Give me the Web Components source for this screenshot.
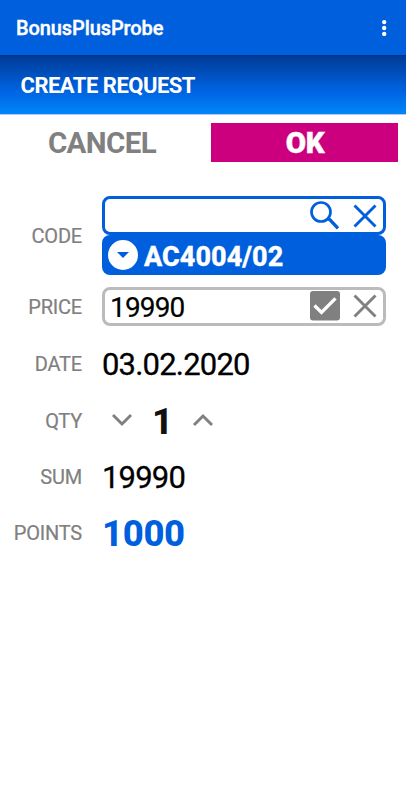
<!DOCTYPE html>
<html lang="en">
<head>
<meta charset="utf-8">
<title>BonusPlusProbe</title>
<style>
body{margin:0;background:#fff;font-family:Roboto,"Liberation Sans",sans-serif}
</style>
</head>
<body>
<request-page></request-page>
<script>
function define(name, html) {
  const t = document.createElement('template');
  t.innerHTML = html;
  customElements.define(name, class extends HTMLElement {
    constructor() {
      super();
      this.attachShadow({mode: 'open'}).append(t.content.cloneNode(true));
    }
  });
}

define('app-bar', `<style>
:host{display:flex;height:55px;box-sizing:border-box;align-items:center;justify-content:space-between;padding:0 18px 0 16px;background:#005fdc;color:#fff;font-size:20px;font-weight:500;line-height:24px;letter-spacing:-.1px;-webkit-text-stroke:.4px #fff}
svg{display:block}
</style><span><slot></slot></span>
<svg width="8" height="18" viewBox="0 0 8 18" fill="#fff"><circle cx="4.2" cy="3.1" r="2.2"/><circle cx="4.2" cy="9" r="2.2"/><circle cx="4.2" cy="14.9" r="2.2"/></svg>`);

define('title-bar', `<style>
:host{display:flex;height:60px;box-sizing:border-box;align-items:center;padding:2px 0 0 20.5px;background:linear-gradient(#003283 0,#003c99 2px,#0062e0 35px,#0084f7 58px);border-bottom:1px solid #b3c6ff;color:#fff;font-size:22px;font-weight:700;line-height:26px;letter-spacing:-.5px}
</style><span><slot></slot></span>`);

define('action-button', `<style>
:host{display:flex;flex:1;height:39px;align-items:center;justify-content:center;color:#808080;font-size:29.5px;font-weight:700;line-height:34px;letter-spacing:-.6px}
:host(:not([primary])){box-sizing:border-box;padding-right:2px}
:host([primary]){background:#cc007e;color:#fff;font-weight:900;letter-spacing:-.3px;padding-left:1px;flex:0 0 186px;-webkit-text-stroke:.4px #fff}
</style><span><slot></slot></span>`);

define('form-row', `<style>
:host{display:grid;grid-template-columns:82px 284px;column-gap:20px;align-items:center;height:var(--h,56px)}
.label{text-align:right;color:#808080;font-size:20px;line-height:24px;letter-spacing:-.2px;padding-top:var(--drop,0);-webkit-text-stroke:.2px}
.value{font-size:31px;line-height:36px;letter-spacing:-.8px;color:#000}
</style><div class="label"><slot name="label"></slot></div><div class="value"><slot></slot></div>`);

define('entry-field', `<style>
:host{display:flex;box-sizing:border-box;height:39px;border:3px solid var(--c,#bbb);border-radius:8px;align-items:center;justify-content:space-between;padding:0 4px 0 5px;font-size:28px;line-height:32px;letter-spacing:-.85px;-webkit-text-stroke:.2px}
span{padding-top:3px}
.icons{display:flex;gap:10px}
</style><span><slot></slot></span><div class="icons"><slot name="icon"></slot></div>`);

define('choice-bar', `<style>
:host{display:flex;box-sizing:border-box;height:40px;border-radius:8px;align-items:center;gap:6px;padding:1px 0 0 6px;background:#005fdc;color:#fff;font-size:27px;font-weight:800;line-height:32px;letter-spacing:.05px;-webkit-text-stroke:.3px #fff}
span{padding-top:2px}
svg{margin-top:-1px}
</style><svg width="30" height="30" viewBox="0 0 30 30"><circle cx="15" cy="15" r="15" fill="#fff"/><path d="M9 12h12l-6 6z" fill="#005fdc"/></svg><span><slot></slot></span>`);

const icons = {
  search: [30, '<circle cx="11" cy="11" r="9.5" stroke-width="2.7"/><path d="M17.5 17.5l2.5 1.4 8 8.5" stroke-width="3.3"/>'],
  close: [29, '<path d="M4.5 4.5l21 21M25.5 4.5L4.5 25.5" stroke-width="2.9"/>'],
  check: [30, '<rect width="30" height="29.5" rx="3" fill="currentColor" stroke="none"/><path d="M4.5 14.5l7 7L25.5 7.3" stroke="#fff" stroke-width="3.3"/>'],
  down: [22, '<path d="M2 6l9 9 9-9" stroke-width="2.9"/>'],
  up: [22, '<path d="M2 16l9-9 9 9" stroke-width="2.9"/>']
};
customElements.define('line-icon', class extends HTMLElement {
  constructor() {
    super();
    this.attachShadow({mode: 'open'});
  }
  connectedCallback() {
    const [s, body] = icons[this.getAttribute('name')];
    this.shadowRoot.innerHTML = `<style>:host{display:block}svg{display:block}</style>
<svg width="${s}" height="${s}" viewBox="0 0 ${s} ${s}" fill="none" stroke="currentColor">${body}</svg>`;
  }
});

define('quantity-stepper', `<style>
:host{display:flex;align-items:center;padding-left:9px;color:#808080}
b{width:59px;text-align:center;font-size:36.5px;font-weight:800;color:#111;line-height:40px;letter-spacing:0;padding-top:3px}
</style><line-icon name="down"></line-icon><b><slot></slot></b><line-icon name="up"></line-icon>`);

define('request-page', `<style>
:host{display:block;width:406px;height:800px;background:#fff;overflow:hidden}
.actions{display:flex;gap:14px;padding:8px 8px 0 9px}
.form{padding-top:34px}
.blue{color:#005fdc;--c:#005fdc}
.grey{color:#808080}
.num{display:block;padding-top:2px;-webkit-text-stroke:.3px}
.points{color:#005fdc;font-weight:800;font-size:36.5px;letter-spacing:-.35px;display:block;padding-top:2px}
</style>
<app-bar>BonusPlusProbe</app-bar>
<title-bar>CREATE REQUEST</title-bar>
<div class="actions"><action-button>CANCEL</action-button><action-button primary>OK</action-button></div>
<div class="form">
<form-row style="--h:79px;--drop:1px"><span slot="label">CODE</span>
<entry-field class="blue"><line-icon slot="icon" name="search"></line-icon><line-icon slot="icon" name="close"></line-icon></entry-field>
<choice-bar>AC4004/02</choice-bar></form-row>
<form-row style="--h:62px;--drop:2px"><span slot="label">PRICE</span>
<entry-field>19990<line-icon class="grey" slot="icon" name="check"></line-icon><line-icon class="grey" slot="icon" name="close"></line-icon></entry-field></form-row>
<form-row style="--h:54px"><span slot="label">DATE</span><span class="num">03.02.2020</span></form-row>
<form-row style="--h:58px;--drop:1px"><span slot="label">QTY</span><quantity-stepper>1</quantity-stepper></form-row>
<form-row style="--h:56px"><span slot="label">SUM</span><span class="num">19990</span></form-row>
<form-row style="--h:55px"><span slot="label">POINTS</span><span class="points">1000</span></form-row>
</div>`);
</script>
</body>
</html>
